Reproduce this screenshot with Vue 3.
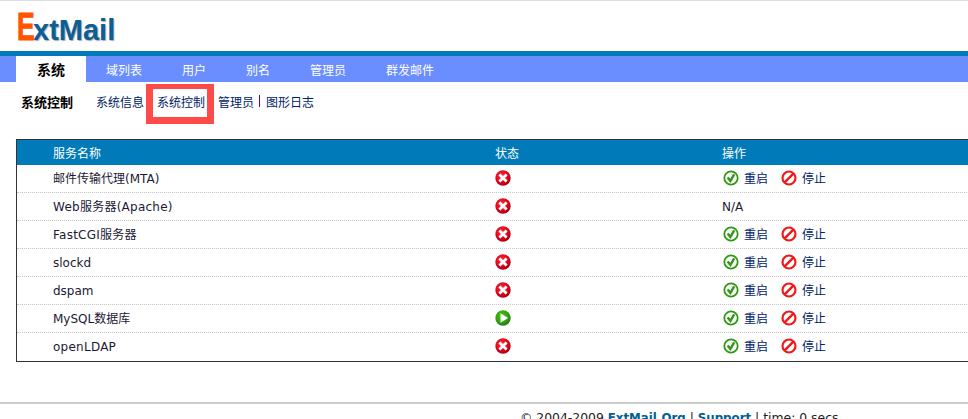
<script setup>
const tabs = ['域列表', '用户', '别名', '管理员', '群发邮件']
const rows = [
  { name: '邮件传输代理(MTA)', state: 'off', actions: true },
  { name: 'Web服务器(Apache)', state: 'off', actions: false, wide: true },
  { name: 'FastCGI服务器', state: 'off', actions: true, wide: true },
  { name: 'slockd', state: 'off', actions: true },
  { name: 'dspam', state: 'off', actions: true },
  { name: 'MySQL数据库', state: 'on', actions: true },
  { name: 'openLDAP', state: 'off', actions: true, wide: true },
]
</script>

<template>
  <div class="page">
    <svg class="defs" width="0" height="0">
      <defs>
        <radialGradient id="redBall" cx="0.4" cy="0.35" r="0.75">
          <stop offset="0" stop-color="#ff2a35" />
          <stop offset="0.65" stop-color="#d80018" />
          <stop offset="1" stop-color="#8a0010" />
        </radialGradient>
        <radialGradient id="greenBall" cx="0.4" cy="0.35" r="0.75">
          <stop offset="0" stop-color="#4cc414" />
          <stop offset="0.65" stop-color="#2c9a0c" />
          <stop offset="1" stop-color="#245a30" />
        </radialGradient>
      </defs>
    </svg>
    <header class="top">
      <div class="logo"><span class="logo-e">E</span><span class="logo-rest">xtMail</span></div>
    </header>
    <nav class="tabs">
      <a class="tab active">系统</a>
      <a v-for="t in tabs" :key="t" class="tab">{{ t }}</a>
    </nav>
    <div class="subnav">
      <b class="sub-title">系统控制</b>
      <a class="sub-link first">系统信息</a>
      <a class="sub-link second">系统控制</a>
      <a class="sub-link third">管理员</a>
      <span class="pipe"></span>
      <a class="sub-link">图形日志</a>
      <span class="marker"></span>
    </div>
    <section class="table">
      <div class="row head">
        <div>服务名称</div>
        <div>状态</div>
        <div>操作</div>
      </div>
      <div v-for="r in rows" :key="r.name" class="row body">
        <div class="name" :class="{ wide: r.wide }">{{ r.name }}</div>
        <div class="state">
          <svg v-if="r.state === 'off'" width="16" height="16" viewBox="0 0 16 16">
            <circle cx="8" cy="8" r="7.7" fill="url(#redBall)" />
            <path d="M3.4 5.4l2-2L8 6l2.6-2.6 2 2L10 8l2.6 2.6-2 2L8 10l-2.6 2.6-2-2L6 8z" fill="#fff" />
          </svg>
          <svg v-else width="16" height="16" viewBox="0 0 16 16">
            <circle cx="8" cy="8" r="7.7" fill="url(#greenBall)" />
            <path d="M5.5 3.2v9.6L13.2 8z" fill="#fff" />
          </svg>
        </div>
        <div v-if="r.actions" class="actions">
          <a class="act">
            <svg width="16" height="16" viewBox="0 0 16 16">
              <circle cx="8" cy="8" r="6.7" fill="#fff" stroke="#2e9a12" stroke-width="1.8" />
              <path d="M4.6 7.4l2.8 3.4 3.8-6.4" fill="none" stroke="#2e9a12" stroke-width="2.4" />
            </svg>
            <span>重启</span>
          </a>
          <a class="act">
            <svg width="16" height="16" viewBox="0 0 16 16">
              <circle cx="8" cy="8" r="6.5" fill="#fff" stroke="#f01a1a" stroke-width="2.2" />
              <path d="M3.6 12.4l8.8-8.8" stroke="#f01a1a" stroke-width="2.4" />
            </svg>
            <span>停止</span>
          </a>
        </div>
        <div v-else class="name">N/A</div>
      </div>
    </section>
    <footer class="foot">
      © 2004-2009 <a>ExtMail.Org</a> | <a>Support</a> | time: 0 secs
    </footer>
  </div>
</template>

<style scoped>
.page {
  width: 968px;
  height: 419px;
  overflow: hidden;
  font-family: "DejaVu Sans", "Noto Sans CJK SC", sans-serif;
  font-size: 12px;
  color: #111;
  background: #fff;
}
.defs {
  position: absolute;
}
.top {
  height: 50px;
  border-top: 1px solid #ddd;
  border-bottom: 5px solid #007ab8;
  padding-left: 17px;
}
.logo {
  display: flex;
  align-items: baseline;
  height: 50px;
  line-height: 51px;
  font-family: "Liberation Sans", sans-serif;
  font-weight: 700;
}
.logo-e {
  display: inline-block;
  width: 16px;
  font-size: 39px;
  color: #ff5500;
  transform: scaleX(0.68);
  transform-origin: left;
  -webkit-text-stroke: 1px #ff5500;
}
.logo-rest {
  font-size: 29px;
  color: #0a5f96;
  text-shadow: 1px 1px 1px #aab;
}
.tabs {
  display: flex;
  height: 26px;
  padding-left: 16px;
  background: #6a8eff;
  font-family: "Noto Sans CJK SC", sans-serif;
}
.tab {
  padding: 0 20px;
  line-height: 28px;
  color: #fff;
}
.tab.active {
  width: 70px;
  box-sizing: border-box;
  padding: 0;
  text-align: center;
  background: #fff;
  color: #000;
  font-weight: 700;
  font-size: 14px;
  line-height: 26px;
}
.subnav {
  position: relative;
  display: flex;
  align-items: center;
  height: 38px;
  padding: 0 0 2px 21px;
  font-family: "Noto Sans CJK SC", sans-serif;
}
.sub-title {
  color: #000;
  font-size: 13px;
}
.sub-link {
  color: #002266;
}
.first {
  margin-left: 23px;
}
.second,
.third {
  margin-left: 13px;
}
.pipe {
  width: 1px;
  height: 12px;
  margin: 0 6px 0 5px;
  background: #800060;
}
.marker {
  position: absolute;
  left: 146px;
  top: 2px;
  width: 68px;
  height: 40px;
  box-sizing: border-box;
  border: 7px solid #ff4a4a;
  border-top-width: 5px;
}
.table {
  margin: 17px 0 0 16px;
  width: 1000px;
  border-left: 1px solid #333;
  border-top: 1px solid #333;
  border-bottom: 1px solid #333;
}
.row {
  display: grid;
  grid-template-columns: 442px 227px 1fr;
  align-items: center;
  padding-left: 36px;
}
.head {
  height: 25px;
  padding-bottom: 1px;
  box-sizing: border-box;
  background: #007ab8;
  color: #fff;
  font-family: "Noto Sans CJK SC", sans-serif;
}
.body {
  padding-bottom: 1px;
  border-bottom: 1px dotted #c4c4c4;
  color: #1a1a33;
  height: 26px;
}
.body:last-child {
  border-bottom: 0;
  padding-bottom: 2px;
}
.name {
  height: 16px;
  line-height: 16px;
  margin-top: 2px;
}
.wide {
  letter-spacing: 0.25px;
}
.state {
  display: flex;
  align-items: center;
}
.actions {
  display: flex;
  align-items: center;
  gap: 13px;
  color: #002266;
  padding-left: 1px;
  height: 16px;
  line-height: 16px;
}
.act {
  display: flex;
  align-items: center;
  gap: 5px;
  font-family: "Noto Sans CJK SC", sans-serif;
}
.foot {
  margin-top: 40px;
  height: 30px;
  border-top: 2px solid #ccc;
  padding: 6px 0 0 520px;
  font-size: 12.4px;
  color: #222;
  white-space: nowrap;
}
.foot a {
  font-weight: 700;
  font-size: 11.8px;
  color: #00608f;
}
</style>

<style>
html, body { margin: 0; overflow: hidden; }
</style>
